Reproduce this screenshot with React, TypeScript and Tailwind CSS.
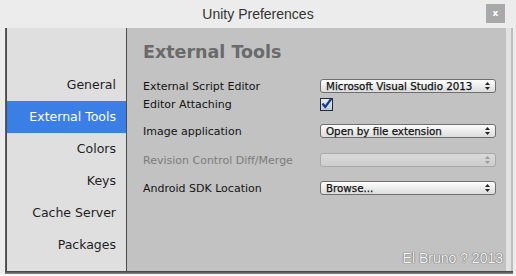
import React from "react";

const Arrows = ({ color = "#222" }: { color?: string }) => (
  <svg width="5" height="8" viewBox="0 0 5 8" className="shrink-0">
    <path d="M2.5 0 L5 3 L0 3 Z" fill={color} />
    <path d="M0 5 L5 5 L2.5 8 Z" fill={color} />
  </svg>
);

const Dropdown = ({ text, disabled }: { text?: string; disabled?: boolean }) => (
  <div
    className={
      "w-[176px] h-[14px] rounded-[3px] border flex items-center justify-between pl-[5px] pr-[5px] " +
      (disabled
        ? "border-[#a9a9a9] bg-gradient-to-b from-[#dadada] to-[#cdcdcd]"
        : "border-[#6f6f6f] bg-gradient-to-b from-[#fdfdfd] to-[#dcdcdc]")
    }
  >
    <span className="text-[10.3px] leading-none text-[#111] [font-family:'DejaVu_Sans',sans-serif] [-webkit-text-stroke:0.25px_#111]">
      {text}
    </span>
    <Arrows color={disabled ? "#9a9a9a" : "#222"} />
  </div>
);

const Row = ({
  label,
  disabled,
  children,
  className = "",
}: {
  label: string;
  disabled?: boolean;
  children: React.ReactNode;
  className?: string;
}) => (
  <div className={"flex items-center h-[18px] " + className}>
    <div
      className={
        "w-[177px] text-[11px] leading-none [font-family:'DejaVu_Sans',sans-serif] " +
        (disabled ? "text-[#7c7c7c]" : "text-[#141414]")
      }
    >
      {label}
    </div>
    {children}
  </div>
);

const navItems = ["General", "External Tools", "Colors", "Keys", "Cache Server", "Packages"];

export default function App() {
  return (
    <div className="w-[516px] h-[276px] bg-[#ececec] flex flex-col overflow-hidden relative">
      {/* Title bar */}
      <div className="h-[28px] shrink-0 flex items-center justify-center relative">
        <span className="text-[14px] text-[#333] [font-family:'Liberation_Sans',sans-serif] mt-[1px]">
          Unity Preferences
        </span>
        <div className="absolute left-[486px] top-[4px] w-[19px] h-[19px] bg-[#a9a9a9] flex items-center justify-center">
          <span className="text-white text-[9px] font-bold leading-none [font-family:'DejaVu_Sans',sans-serif] mt-[-1px]">
            x
          </span>
        </div>
      </div>

      {/* Body */}
      <div className="flex h-[243px] shrink-0 pl-[5px]">
        <div className="w-[2px] bg-gradient-to-r from-[#6a6a6a] to-[#3e3e3e]" />
        {/* Left nav */}
        <div className="w-[119px] bg-[#dfdfdf] pt-[41px] flex flex-col">
          {navItems.map((item) => (
            <div
              key={item}
              className={
                "h-[32px] flex items-center justify-end pr-[10px] text-[12.5px] [font-family:'DejaVu_Sans',sans-serif] " +
                (item === "External Tools" ? "bg-[#3b7fe6] text-white" : "text-[#1e1e1e]")
              }
            >
              {item}
            </div>
          ))}
        </div>
        <div className="w-[1px] bg-[#4c4c4c]" />
        {/* Right panel */}
        <div className="w-[379px] bg-[#c2c2c2] pt-[12px] pl-[16px] flex flex-col relative">
          <div className="h-[24px] flex items-center text-[17.5px] font-bold text-[#6a6a6a] [font-family:'DejaVu_Sans',sans-serif]">
            External Tools
          </div>
          <Row label="External Script Editor" className="mt-[13px]">
            <Dropdown text="Microsoft Visual Studio 2013" />
          </Row>
          <Row label="Editor Attaching">
            <div className="w-[13px] h-[13px] border border-[#2a2a2a] bg-gradient-to-b from-[#e6eefa] to-[#b9cbe6] relative">
              <svg width="13" height="13" viewBox="0 0 13 13" className="absolute left-[-1px] top-[-2px]">
                <path d="M2.5 6.5 L5.2 10 L11.5 1.5" stroke="#1d3a7a" strokeWidth="2.2" fill="none" />
              </svg>
            </div>
          </Row>
          <Row label="Image application" className="mt-[9px]">
            <Dropdown text="Open by file extension" />
          </Row>
          <Row label="Revision Control Diff/Merge" disabled className="mt-[11px]">
            <Dropdown disabled />
          </Row>
          <Row label="Android SDK Location" className="mt-[10px]">
            <Dropdown text="Browse..." />
          </Row>
          <div className="absolute right-[3px] bottom-[2px] text-[14px] text-[#f6f6f6] [font-family:'Liberation_Sans',sans-serif] [text-shadow:0_0_1px_#555,0_0_1px_#555]">
            El Bruno ? 2013
          </div>
        </div>
        <div className="w-[5px] bg-[#e2e2e2]" />
        <div className="w-[2px] bg-[#bdbdbd]" />
      </div>
      {/* Bottom shadow */}
      <div className="h-[3px] shrink-0 ml-[5px] w-[508px] bg-gradient-to-b from-[#3c3c3c] to-[#8a8a8a]" />
      <div className="flex-1 bg-[#fafafa]" />
    </div>
  );
}
